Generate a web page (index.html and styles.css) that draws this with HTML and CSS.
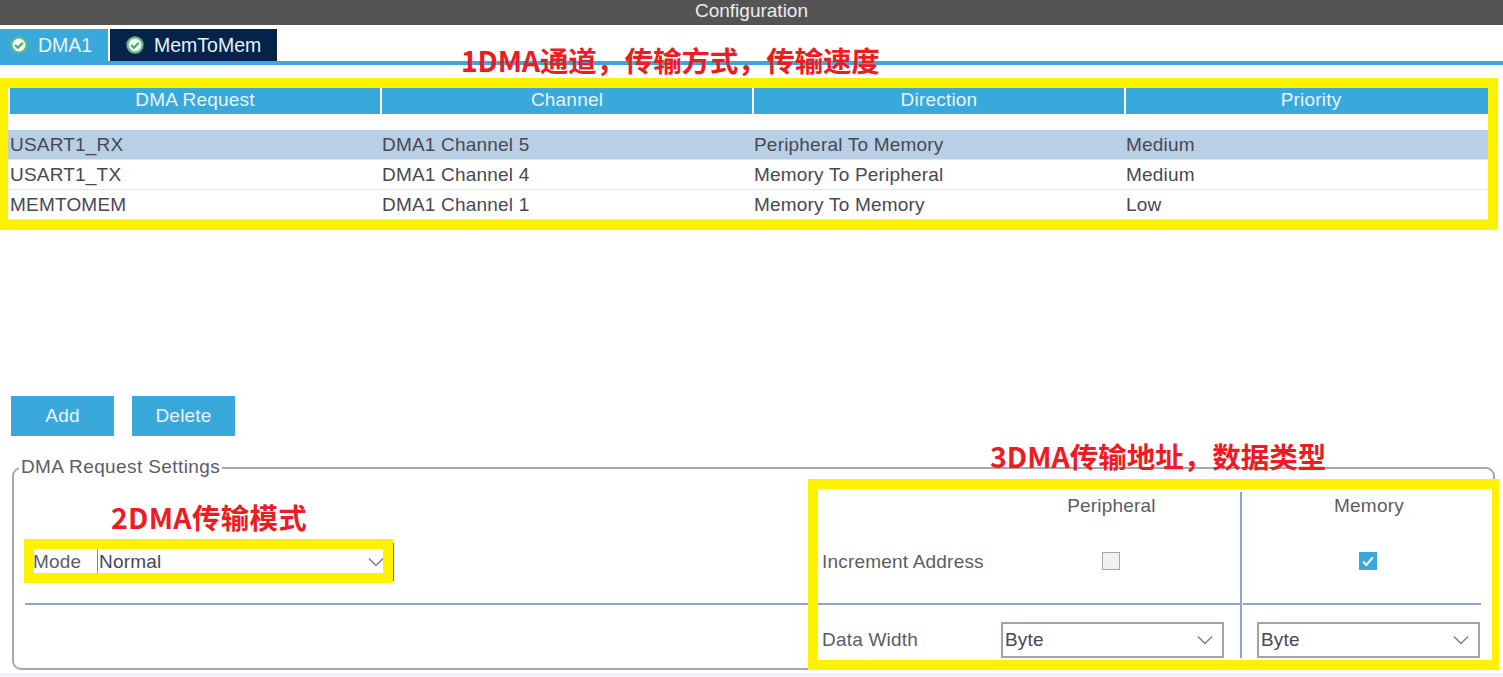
FILE: index.html
```html
<!DOCTYPE html>
<html lang="en">
<head>
<meta charset="utf-8">
<title>Configuration</title>
<link rel="stylesheet" href="styles.css">
</head>
<body>
<div class="app">
  <header class="titlebar">Configuration</header>
  <nav class="tabs">
    <div class="tab tab-active">
      <svg class="tab-icon" viewBox="0 0 16 16"><circle cx="8" cy="8" r="6.7" fill="#f4fbf6" stroke="#5dbb84" stroke-width="2"/><path d="M4.6 8l2.4 2.4 4.4-4.4" fill="none" stroke="#45a86e" stroke-width="2"/></svg>
      DMA1
    </div>
    <div class="tab tab-dark">
      <svg class="tab-icon" viewBox="0 0 16 16"><circle cx="8" cy="8" r="6.7" fill="#f4fbf6" stroke="#5dbb84" stroke-width="2"/><path d="M4.6 8l2.4 2.4 4.4-4.4" fill="none" stroke="#45a86e" stroke-width="2"/></svg>
      MemToMem
    </div>
  </nav>

  <section class="dma-table">
    <div class="thead">
      <div class="th">DMA Request</div>
      <div class="th">Channel</div>
      <div class="th">Direction</div>
      <div class="th">Priority</div>
    </div>
    <div class="tr tr-selected">
      <div class="td">USART1_RX</div>
      <div class="td">DMA1 Channel 5</div>
      <div class="td">Peripheral To Memory</div>
      <div class="td">Medium</div>
    </div>
    <div class="tr">
      <div class="td">USART1_TX</div>
      <div class="td">DMA1 Channel 4</div>
      <div class="td">Memory To Peripheral</div>
      <div class="td">Medium</div>
    </div>
    <div class="tr">
      <div class="td">MEMTOMEM</div>
      <div class="td">DMA1 Channel 1</div>
      <div class="td">Memory To Memory</div>
      <div class="td">Low</div>
    </div>
  </section>

  <div class="actions">
    <button class="btn">Add</button>
    <button class="btn">Delete</button>
  </div>

  <fieldset class="settings">
    <legend class="legend">DMA Request Settings</legend>
    <div class="settings-grid">
      <div class="head head-peripheral">Peripheral</div>
      <div class="head head-memory col-mem">Memory</div>

      <div class="mode-cell">
        <span class="mode-label">Mode</span>
        <div class="mode-value">
          <span>Normal</span>
          <svg class="chevron" viewBox="0 0 16 10"><path d="M1 1.5l7 7 7-7" fill="none" stroke="#7d7d7d" stroke-width="1.4"/></svg>
        </div>
      </div>
      <div class="row-label">Increment Address</div>
      <div class="check-cell"><span class="check"></span></div>
      <div class="check-cell col-mem">
        <span class="check check-on">
          <svg viewBox="0 0 18 18"><path d="M4 9.5l3.4 3.4 6.4-7.6" fill="none" stroke="#fff" stroke-width="2"/></svg>
        </span>
      </div>

      <div class="rule rule-main"></div>
      <div class="rule-cell col-mem"><div class="rule"></div></div>

      <div class="row-label row-label-data">Data Width</div>
      <div class="select-cell">
        <div class="select">
          <span>Byte</span>
          <svg class="chevron" viewBox="0 0 16 10"><path d="M1 1.5l7 7 7-7" fill="none" stroke="#7d7d7d" stroke-width="1.4"/></svg>
        </div>
      </div>
      <div class="select-cell col-mem">
        <div class="select">
          <span>Byte</span>
          <svg class="chevron" viewBox="0 0 16 10"><path d="M1 1.5l7 7 7-7" fill="none" stroke="#7d7d7d" stroke-width="1.4"/></svg>
        </div>
      </div>
    </div>
  </fieldset>

  <div class="footer-strip"></div>

  <div class="frame frame-1"></div>
  <div class="frame frame-2"></div>
  <div class="frame frame-3"></div>
  <div class="note note-1">1DMA通道，传输方式，传输速度</div>
  <div class="note note-2">2DMA传输模式</div>
  <div class="note note-3">3DMA传输地址，数据类型</div>
</div>
</body>
</html>
```

FILE: styles.css
```css
* { box-sizing: border-box; }

html, body {
  margin: 0;
  padding: 0;
  background: #fff;
}

.app {
  position: relative;
  width: 1503px;
  height: 677px;
  overflow: hidden;
  display: flex;
  flex-direction: column;
  font-family: "Liberation Sans", Arial, sans-serif;
  font-size: 19px;
  letter-spacing: 0.2px;
  color: #484852;
  background: #fff;
}

.titlebar {
  flex: none;
  height: 25px;
  line-height: 22px;
  text-align: center;
  background: #535453;
  color: #eceded;
  font-size: 19px;
  letter-spacing: 0;
}

.tabs {
  flex: none;
  display: flex;
  gap: 2px;
  height: 36px;
  margin-top: 4px;
  border-bottom: 4px solid #39a9dc;
}

.tab {
  display: flex;
  align-items: center;
  gap: 10px;
  height: 32px;
  padding-left: 10px;
  color: #e9f3f8;
  font-size: 19.5px;
  letter-spacing: 0;
}

.tab-active { width: 108px; background: #39a9dc; }
.tab-dark { width: 167px; padding-left: 16px; background: #03234b; }
.tab-icon { width: 18px; height: 18px; flex: none; }

.dma-table {
  flex: none;
  margin-top: 23px;
  padding: 0 7px 0 10px;
}

.thead, .tr {
  display: grid;
  grid-template-columns: 370px 370px 370px 1fr;
  column-gap: 2px;
}

.thead { height: 26px; margin-bottom: 16px; }

.th {
  background: #39a9dc;
  color: #e9f4fb;
  text-align: center;
  line-height: 23px;
}

.tr {
  height: 30px;
  border-bottom: 1px solid #e4e7ea;
  margin-left: -2px;
  padding-left: 2px;
}

.tr-selected { background: #b9cfe6; }

.td { line-height: 29px; }

.actions {
  flex: none;
  display: flex;
  gap: 18px;
  margin-top: 176px;
  padding-left: 11px;
}

.btn {
  width: 103px;
  height: 40px;
  padding: 0;
  border: 0;
  background: #39a9dc;
  color: #e9f4fb;
  font: inherit;
  letter-spacing: 0.2px;
}

.settings {
  flex: none;
  height: 213px;
  margin: 21px 8px 0 12px;
  padding: 0 0 0 11px;
  border: 2px solid #a6a9ac;
  border-radius: 9px;
  min-width: 0;
}

.legend {
  margin-left: -6px;
  padding: 0 2px 0 2px;
  height: 21px;
  line-height: 19px;
  letter-spacing: 0.4px;
  color: #5c5c66;
}

.settings-grid {
  display: grid;
  grid-template-columns: 797px 179px 239px 241px;
  grid-template-rows: 28px 83px 2px 53px;
  margin-top: 14px;
}

.head { text-align: center; line-height: 28px; color: #5c5c66; }
.head-peripheral { grid-column: 3; grid-row: 1; padding-right: 18px; }
.head-memory { grid-column: 4; grid-row: 1; }

.col-mem {
  border-left: 2px solid #8ea3d2;
  padding-left: 15px;
}

.mode-cell {
  grid-column: 1;
  grid-row: 2;
  align-self: center;
  display: flex;
  align-items: center;
  width: 369px;
  height: 38px;
  padding-left: 8px;
}

.mode-label { width: 64px; flex: none; color: #5c5c66; }

.mode-value {
  flex: 1;
  height: 100%;
  display: flex;
  align-items: center;
  justify-content: space-between;
  padding: 0 9px 0 1px;
  border-left: 1px solid #8b8b92;
  border-right: 1px solid #6b6b6b;
}

.row-label {
  grid-column: 2;
  grid-row: 2;
  align-self: center;
  color: #5c5c66;
}

.row-label-data {
  grid-row: 4;
  align-self: end;
  line-height: 36px;
}

.check-cell {
  grid-row: 2;
  display: flex;
  align-items: center;
  justify-content: center;
  padding-bottom: 1px;
}

.check-cell:not(.col-mem) { grid-column: 3; padding-right: 20px; }
.check-cell.col-mem { grid-column: 4; padding-left: 12px; }

.check {
  width: 18px;
  height: 18px;
  display: block;
  background: #eef0f2;
  border: 1px solid #a5a7aa;
}

.check-on {
  background: #39a9dc;
  border: 0;
}

.check-on svg { display: block; width: 18px; height: 18px; }

.rule { height: 2px; background: #8ea3d2; }
.rule-main { grid-column: 1 / 4; grid-row: 3; }
.rule-cell { grid-column: 4; grid-row: 3; padding-left: 1px; }

.select-cell {
  grid-row: 4;
  display: flex;
  align-items: flex-end;
}

.select-cell:not(.col-mem) { grid-column: 3; }
.select-cell.col-mem { grid-column: 4; }

.select {
  width: 223px;
  height: 36px;
  display: flex;
  align-items: center;
  justify-content: space-between;
  padding: 0 9px 0 2px;
  border: 2px solid #a0a3a7;
}

.chevron { width: 16px; height: 10px; flex: none; }

.footer-strip {
  flex: 1;
  margin-top: 3px;
  background: #f0f2f5;
}

.frame {
  position: absolute;
  border: 10px solid #fff200;
}

.frame-1 { left: 0; top: 78px; width: 1498px; height: 152px; border-left-width: 8px; }
.frame-2 { left: 24px; top: 539px; width: 369px; height: 44px; }
.frame-3 { left: 808px; top: 479px; width: 691px; height: 191px; border-right-width: 7px; }

.note {
  position: absolute;
  font-family: "Noto Sans CJK SC", "Noto Sans", sans-serif;
  font-weight: 700;
  font-size: 28.5px;
  line-height: 34px;
  letter-spacing: 0;
  color: #ed1c24;
  white-space: nowrap;
}

.note-1 { left: 461px; top: 43px; letter-spacing: -0.2px; }
.note-2 { left: 111px; top: 500px; letter-spacing: 0.3px; }
.note-3 { left: 990px; top: 439px; }
```
